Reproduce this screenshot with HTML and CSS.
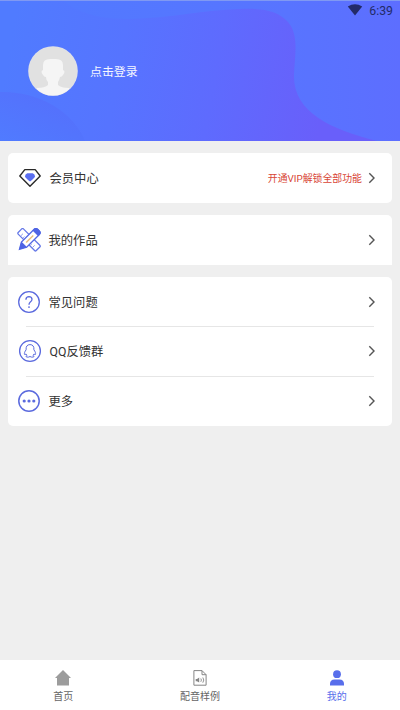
FILE: index.html
```html
<!DOCTYPE html>
<html lang="zh-CN">
<head>
<meta charset="utf-8">
<title>我的</title>
<link rel="stylesheet" href="styles.css">
</head>
<body>
<header class="hero">
  <svg class="hero-bg" viewBox="0 0 400 141" preserveAspectRatio="none" aria-hidden="true">
    <defs>
      <linearGradient id="base" x1="0" x2="1"><stop offset="0" stop-color="#507bff"/><stop offset=".72" stop-color="#5874ff"/><stop offset="1" stop-color="#5d6eff"/></linearGradient>
      <linearGradient id="wave" gradientUnits="userSpaceOnUse" x1="10" y1="40" x2="325" y2="95"><stop offset="0" stop-color="#507bff"/><stop offset=".35" stop-color="#5674ff"/><stop offset=".65" stop-color="#5e6bfe"/><stop offset="1" stop-color="#695ffa"/></linearGradient>
      <linearGradient id="hill" x1="0" y1="1" x2="1" y2="0"><stop offset="0" stop-color="#507bff"/><stop offset="1" stop-color="#566dfb"/></linearGradient>
    </defs>
    <path fill="url(#base)" d="M0 0h400v141H0z"/>
    <path fill="url(#wave)" d="M0 0H62C82 16 105 19 130 19C170 18 205 10 240 9C264 8 278 11 288 22C299 35 295 53 294 75C293 112 330 129 377 141H0z"/>
    <path fill="url(#hill)" d="M0 92C38 91 73 111 85 141H0z"/>
    <path fill="#8099f2" d="M0 0h400v1H0z"/>
  </svg>
  <div class="status">
    <svg width="16" height="12" viewBox="0 0 16 12"><path fill="#232b68" d="M.8 2.5Q8-2 15.2 2.5L8 11.5z"/></svg>
    <span>6:39</span>
  </div>
  <div class="profile">
    <svg width="50" height="50" viewBox="0 0 50 50">
      <defs><clipPath id="round"><circle cx="25" cy="25" r="24.5"/></clipPath></defs>
      <circle cx="25" cy="25" r="24.8" fill="#dfe1e8"/>
      <g clip-path="url(#round)"><circle cx="25" cy="25" r="24" fill="#e1e1e1"/>
      <path fill="#f5f5f5" d="M15 24V19Q15 13 22 13H28Q35 13 35 19V24Q38 25 35 29Q34 31 32 31Q31 35 30 36V39Q33 42 41 42L46 50H4L9 42Q17 42 20 39V36Q18 34 18 31Q16 31 15 29Q12 25 15 24z"/></g>
    </svg>
    <span>点击登录</span>
  </div>
</header>
<main class="content">
  <section class="card">
    <div class="row vip">
      <svg class="icon" viewBox="0 0 24 24"><path d="M6.8 3.6H17.2L22.2 10L12 20.2L1.8 10z" fill="none" stroke="#292929" stroke-width="1.4" stroke-linejoin="round"/><path d="M9.3 7.2H14.7Q17 8.3 17 10.5Q16.5 12 12 15.6Q7.5 12 7 10.5Q7 8.3 9.3 7.2z" fill="#596df0"/></svg>
      <span class="label">会员中心</span><span class="note">开通VIP解锁全部功能</span>
      <svg class="arrow" viewBox="0 0 8 12"><path d="M1.3 1.3L6 6L1.3 10.7"/></svg>
    </div>
  </section>
  <section class="card works">
    <div class="row">
      <svg class="icon" viewBox="0 0 24 24"><g transform="translate(0 -.3) rotate(-45 12 12)"><rect x="8.3" y="-.8" width="7.4" height="25.6" rx="1.2" fill="#fff" stroke="#6578e7" stroke-width="1.3"/><path d="M9 3.5h3M9 6.5h2M9 17h2M9 20h3" stroke="#8290e8" stroke-width=".8"/></g><g transform="translate(0 -.3) rotate(45 12 12)"><path d="M8.3 1Q8.3-1.5 11-1.5H13Q15.7-1.5 15.7 1V19L12 25.5L8.3 19z" fill="#fff" stroke="#5268e5" stroke-width="1.3"/><path d="M7.9 3V1Q7.9-2 11-2H13Q16.1-2 16.1 1V3zM7.9 18.7H16.1L12 26z" fill="#4f64e4"/><path d="M12 6V16" stroke="#e9bd79" stroke-width="1.4"/></g></svg>
      <span class="label">我的作品</span>
      <svg class="arrow" viewBox="0 0 8 12"><path d="M1.3 1.3L6 6L1.3 10.7"/></svg>
    </div>
  </section>
  <section class="card help">
    <div class="row">
      <svg class="icon line" viewBox="0 0 24 24"><circle cx="12" cy="12" r="10.3"/><path d="M8.9 9.7Q9 6.6 12 6.6Q15 6.7 15 9.3Q15 10.8 13.3 12Q12 13 12 14.7"/><circle cx="12" cy="17.1" r=".9" class="solid"/></svg>
      <span class="label">常见问题</span>
      <svg class="arrow" viewBox="0 0 8 12"><path d="M1.3 1.3L6 6L1.3 10.7"/></svg>
    </div>
    <div class="row divided qq">
      <svg class="icon line" viewBox="0 0 24 24"><circle cx="12" cy="12" r="10.4"/><path d="M8.1 10.8C7.8 7.5 9.1 5.6 12 5.6S16.2 7.5 15.9 10.8C17.2 12.6 18 14.3 17.4 15.5Q17 16 16 14.9L15.2 16.4Q17 17.8 15 18.1Q13 18.3 12 17.5Q11 18.3 9 18.1Q7 17.8 8.8 16.4L8 14.9Q7 16 6.6 15.5C6 14.3 6.8 12.6 8.1 10.8z" stroke-width="1"/></svg>
      <span class="label">QQ反馈群</span>
      <svg class="arrow" viewBox="0 0 8 12"><path d="M1.3 1.3L6 6L1.3 10.7"/></svg>
    </div>
    <div class="row divided">
      <svg class="icon line" viewBox="0 0 24 24"><circle cx="12" cy="12" r="10.2" stroke-width="1.5"/><g class="solid"><circle cx="7.2" cy="12" r="1.6"/><circle cx="12" cy="12" r="1.6"/><circle cx="16.8" cy="12" r="1.6"/></g></svg>
      <span class="label">更多</span>
      <svg class="arrow" viewBox="0 0 8 12"><path d="M1.3 1.3L6 6L1.3 10.7"/></svg>
    </div>
  </section>
</main>
<nav class="tabs">
  <div class="tab"><svg viewBox="0 0 16 16"><path fill="#9c9c9c" d="M8 0L16 8H14V15.5H2V8H0z"/></svg><span>首页</span></div>
  <div class="tab"><svg viewBox="0 0 16 16"><g fill="none" stroke="#858585"><path d="M1.9.6H10L14.1 4.7V15.2H1.9zM10 .6V4.7H14.1"/><path d="M8.8 8.5Q10 10 8.8 11.8M10.8 7.5Q12.8 10 10.8 12.7" stroke-width=".9"/></g><path fill="#858585" d="M3.7 9.1H5L7.2 7.6V12.5L5 11.2H3.7z"/></svg><span>配音样例</span></div>
  <div class="tab active"><svg viewBox="0 0 16 16"><g fill="#586eeb"><circle cx="8" cy="4.2" r="3.9"/><path d="M1 15.4V14Q1 9.4 5.6 9.4H10.4Q15 9.4 15 14V15.4z"/></g></svg><span>我的</span></div>
</nav>
</body>
</html>
```
FILE: styles.css
```css
* { box-sizing: border-box; }
body {
  margin: 0;
  height: 710px;
  display: flex;
  flex-direction: column;
  overflow: hidden;
  background: #efefef;
  color: #333;
  font-family: Roboto, "Noto Sans CJK SC", sans-serif;
}
svg { display: block; flex: none; }
.hero { position: relative; height: 141px; flex: none; }
.hero-bg { position: absolute; inset: 0; width: 100%; height: 100%; }
.status {
  position: relative;
  display: flex;
  justify-content: flex-end;
  align-items: center;
  gap: 6px;
  height: 21px;
  padding-right: 7px;
  color: #232b68;
  font-size: 12.3px;
}
.status svg { margin-top: -1px; }
.profile {
  position: relative;
  display: flex;
  align-items: center;
  gap: 12px;
  margin-top: 25px;
  padding-left: 28px;
  color: #f5f7ff;
  font-size: 11.9px;
}
.profile span { margin-top: -1px; }
.content {
  flex: 1;
  display: flex;
  flex-direction: column;
  gap: 12px;
  padding: 12px 8px 0;
}
.card { background: #fff; border-radius: 5px; }
.works { border-radius: 5px 5px 0 0; }
.row {
  position: relative;
  display: flex;
  align-items: center;
  height: 50px;
  padding: 0 16px 0 9px;
}
.help .row:first-child { height: 49px; }
.divided::before {
  content: "";
  position: absolute;
  top: 0;
  left: 18px;
  right: 18px;
  height: 1px;
  background: #e6e6e6;
}
.icon { width: 24px; height: 24px; margin-right: 7.5px; }
.line { fill: none; stroke: #5b6ade; stroke-width: 1.3; }
.solid { fill: #5b6ade; stroke: none; }
.label { font-size: 12.3px; }
.vip .icon, .qq .icon { margin-left: 1px; }
.vip .icon { margin-left: .5px; margin-right: 8px; }
.note { margin-left: auto; margin-right: 6px; color: #d84535; font-size: 9.9px; }
.arrow { width: 8px; height: 12px; margin-left: auto; }
.note + .arrow { margin-left: 0; }
.arrow path { fill: none; stroke: #555; stroke-width: 1.4; }
.tabs {
  height: 50px;
  flex: none;
  display: grid;
  grid-template-columns: repeat(3, 1fr);
  background: #fff;
  color: #666;
  font-size: 10px;
}
.tab { display: flex; flex-direction: column; align-items: center; gap: 3px; padding-top: 10px; }
.tab:first-child { padding-right: 7px; }
.tab:last-child { padding-left: 7px; }
.tab svg { width: 16px; height: 16px; }
.tab span { line-height: 15px; }
.active { color: #586eeb; }
```
